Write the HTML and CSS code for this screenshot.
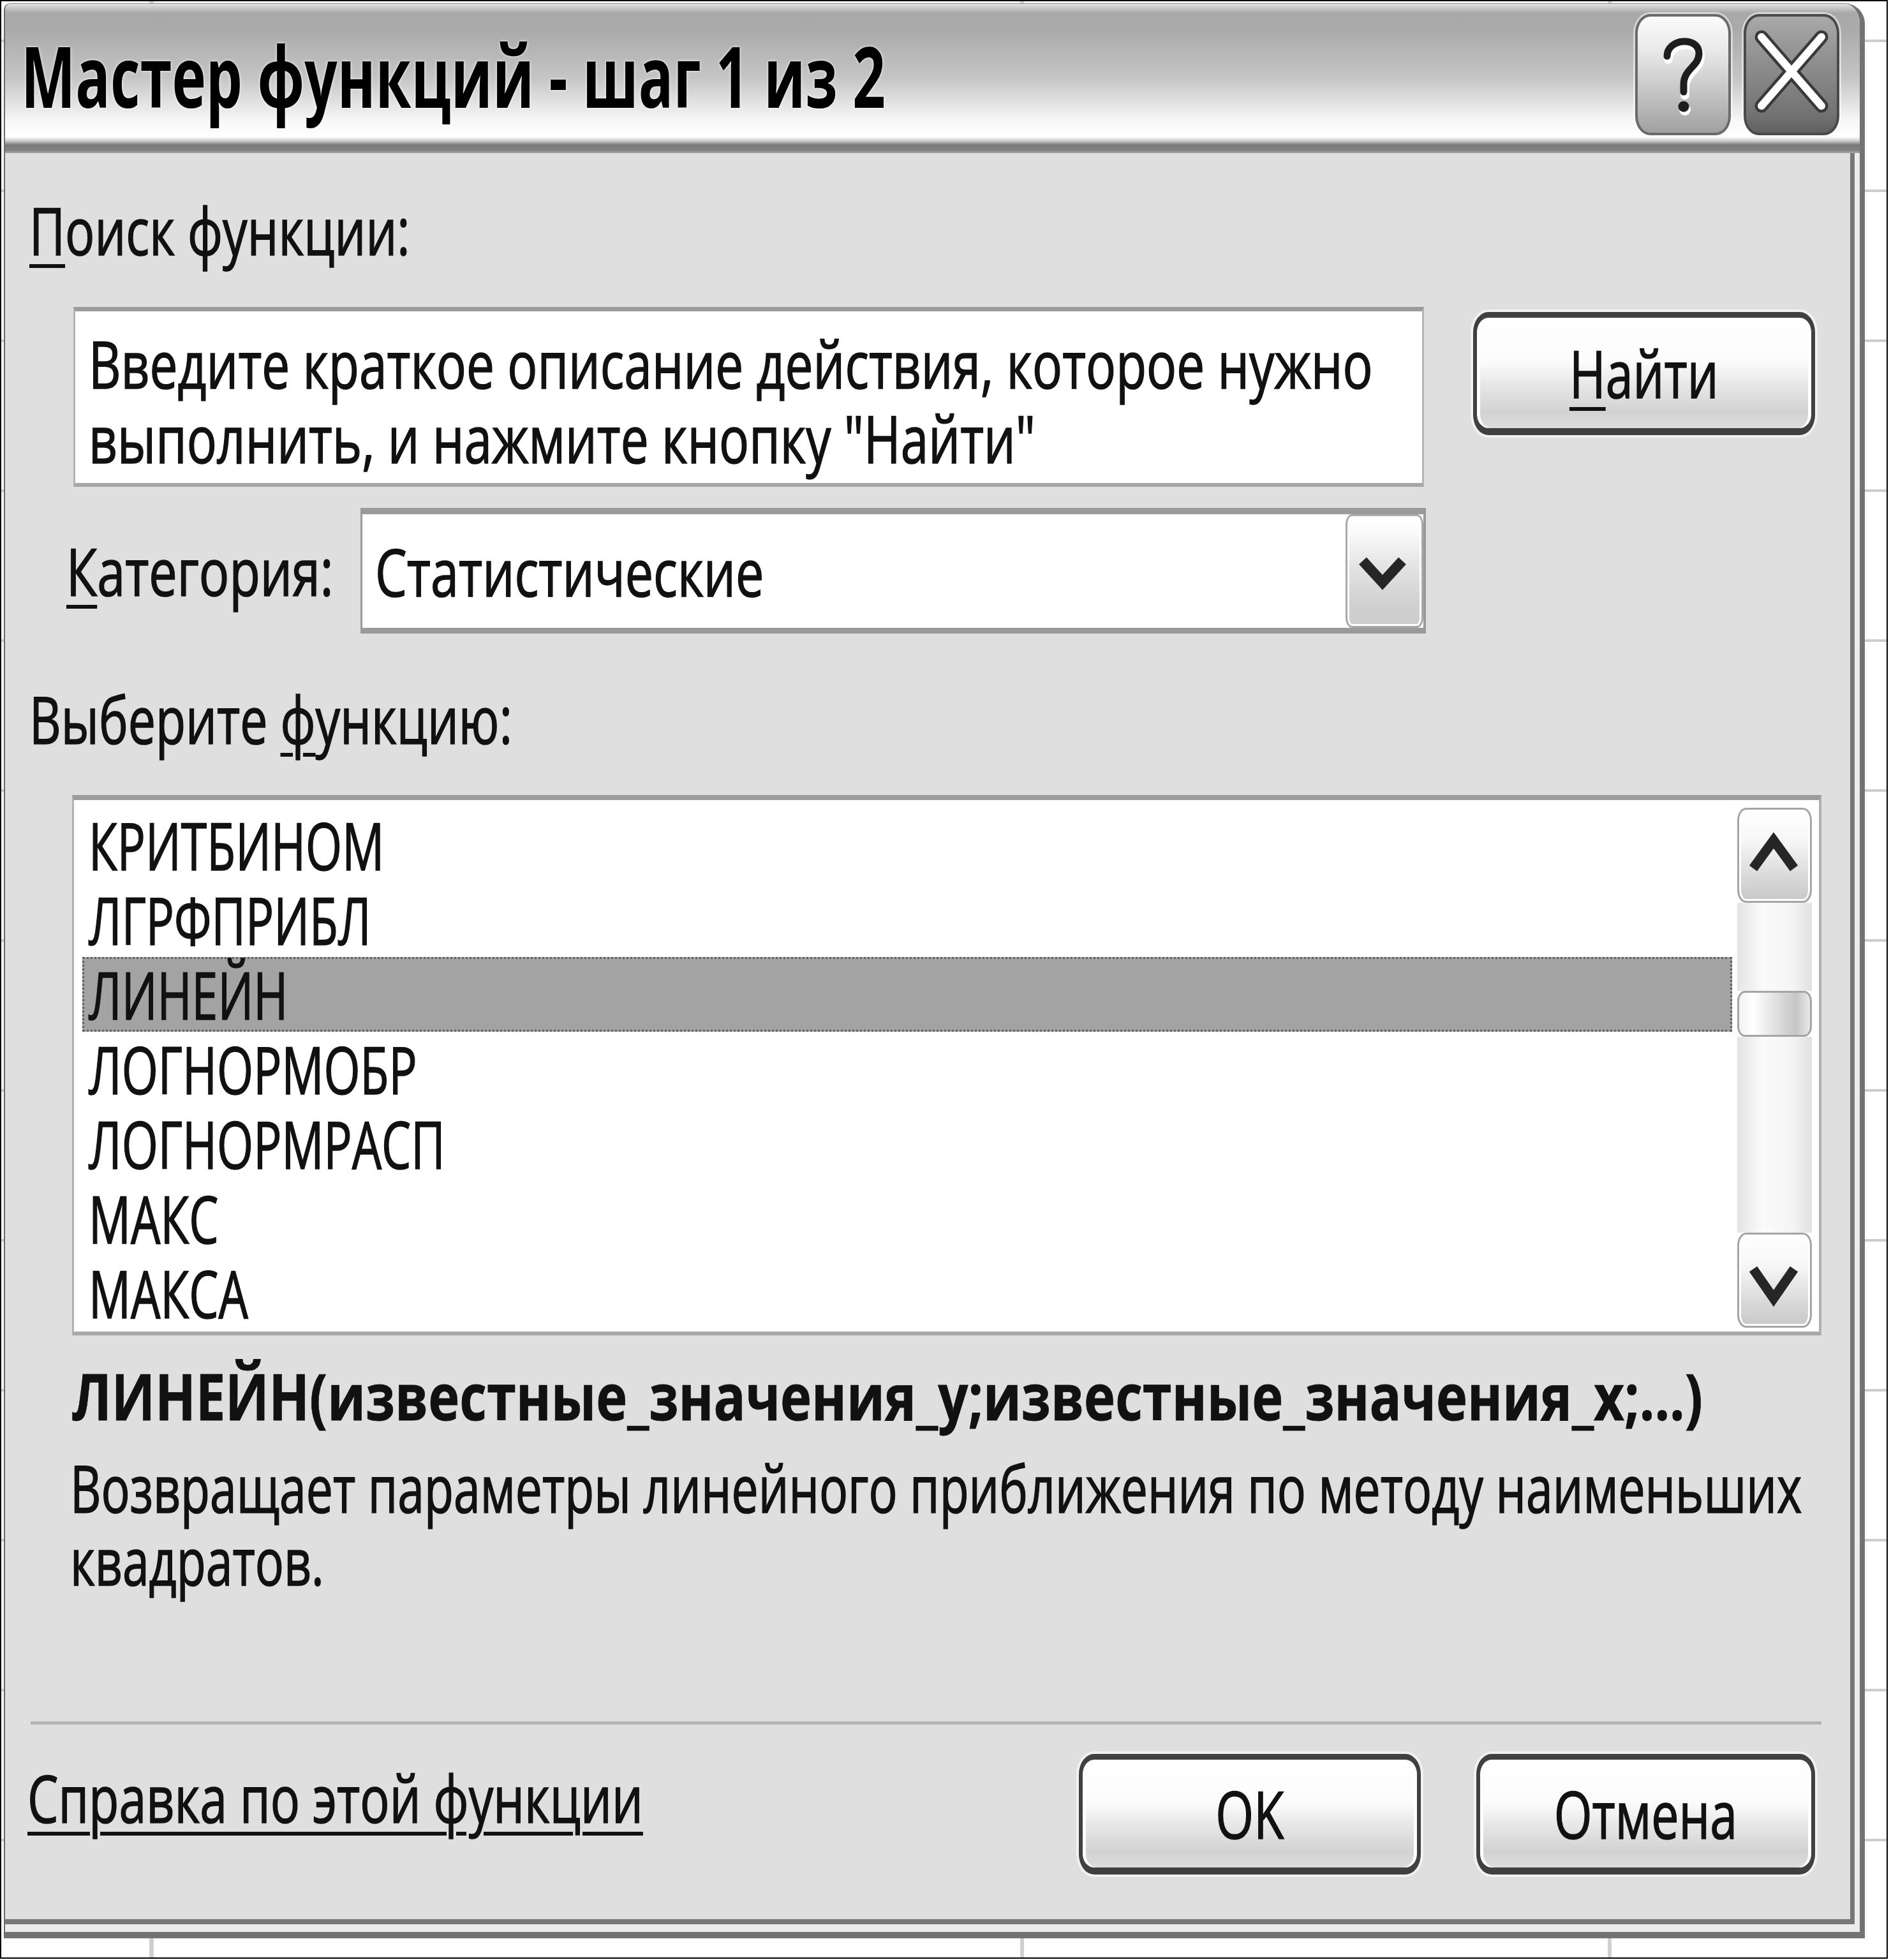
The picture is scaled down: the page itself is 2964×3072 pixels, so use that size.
FILE: index.html
```html
<!DOCTYPE html>
<html lang="ru">
<head>
<meta charset="utf-8">
<title>Мастер функций - шаг 1 из 2</title>
<link rel="stylesheet" href="styles.css">
</head>
<body>
<div class="screen">
  <div class="dialog">
    <div class="titlebar">
      <div class="title"><span class="t">Мастер функций - шаг 1 из 2</span></div>
      <div class="tb-buttons">
        <div class="tb-btn help">
          <svg width="142" height="182" viewBox="0 0 142 182">
            <path d="M46 62 C46 34 96 30 96 58 C96 78 72 82 72 106 L72 118" fill="none" stroke="#fff" stroke-width="14" stroke-linecap="round" transform="translate(2 5)"/>
            <circle cx="74" cy="146" r="9" fill="#fff"/>
            <path d="M46 62 C46 34 96 30 96 58 C96 78 72 82 72 106 L72 118" fill="none" stroke="#1e1e1e" stroke-width="11" stroke-linecap="round"/>
            <circle cx="72" cy="141" r="8.5" fill="#1e1e1e"/>
          </svg>
        </div>
        <div class="tb-btn close">
          <svg width="142" height="182" viewBox="0 0 142 182">
            <path d="M24 32 L118 140 M118 32 L24 140" stroke="#3a3a3a" stroke-width="21" stroke-linecap="round"/>
            <path d="M24 32 L118 140 M118 32 L24 140" stroke="#fff" stroke-width="12" stroke-linecap="round"/>
          </svg>
        </div>
      </div>
    </div>
    <div class="client-wrap">
      <div class="client">
        <div class="line label"><span class="t"><u>П</u>оиск функции:</span></div>
        <div class="search-row">
          <div class="textbox">
            <div class="line"><span class="t">Введите краткое описание действия, которое нужно</span></div>
            <div class="line"><span class="t">выполнить, и нажмите кнопку "Найти"</span></div>
          </div>
          <div class="btn find"><span class="t tc"><u>Н</u>айти</span></div>
        </div>
        <div class="cat-row">
          <div class="line cat-label"><span class="t"><u>К</u>атегория:</span></div>
          <div class="select">
            <div class="line select-value"><span class="t">Статистические</span></div>
            <div class="select-btn">
              <svg width="110" height="172" viewBox="0 0 110 172">
                <polyline points="24,70 55,104 86,70" fill="none" stroke="#262626" stroke-width="16"/>
              </svg>
            </div>
          </div>
        </div>
        <div class="line label choose"><span class="t">Выберите <u>ф</u>ункцию:</span></div>
        <div class="listbox">
          <ul class="items">
            <li><span class="t">КРИТБИНОМ</span></li>
            <li><span class="t">ЛГРФПРИБЛ</span></li>
            <li class="sel"><span class="t">ЛИНЕЙН</span></li>
            <li><span class="t">ЛОГНОРМОБР</span></li>
            <li><span class="t">ЛОГНОРМРАСП</span></li>
            <li><span class="t">МАКС</span></li>
            <li><span class="t">МАКСА</span></li>
          </ul>
          <div class="scrollbar">
            <div class="sb-btn">
              <svg width="111" height="143" viewBox="0 0 111 143">
                <polyline points="22,92 54,48 86,92" fill="none" stroke="#262626" stroke-width="15"/>
              </svg>
            </div>
            <div class="sb-track upper"></div>
            <div class="sb-thumb"></div>
            <div class="sb-track lower"></div>
            <div class="sb-btn">
              <svg width="111" height="143" viewBox="0 0 111 143">
                <polyline points="22,54 54,100 86,54" fill="none" stroke="#262626" stroke-width="15"/>
              </svg>
            </div>
          </div>
        </div>
        <div class="line formula"><span class="t">ЛИНЕЙН(известные_значения_y;известные_значения_x;...)</span></div>
        <div class="desc">
          <div class="dline"><span class="t">Возвращает параметры линейного приближения по методу наименьших</span></div>
          <div class="dline"><span class="t">квадратов.</span></div>
        </div>
        <div class="separator"></div>
        <div class="bottom-row">
          <div class="line help-link"><span class="t">Справка по этой функции</span></div>
          <div class="btn ok"><span class="t tc">OK</span></div>
          <div class="btn cancel"><span class="t tc">Отмена</span></div>
        </div>
      </div>
    </div>
  </div>
</div>
</body>
</html>
```
FILE: styles.css
```css
:root {
  --k: 0.755;
}

* { box-sizing: border-box; }

body {
  margin: 0;
  background: #ffffff;
  font-family: "Open Sans", "Noto Sans", "DejaVu Sans", sans-serif;
  color: #111111;
}

.t {
  display: inline-block;
  white-space: nowrap;
  transform: scaleX(var(--k));
  transform-origin: 0 50%;
  -webkit-text-stroke: 1.6px #111;
}
.t.tc { transform-origin: 50% 50%; }

u {
  text-decoration: underline;
  text-decoration-thickness: 6px;
  text-underline-offset: 14px;
}

.screen {
  width: 2959px;
  height: 3070px;
  border: 2px solid #000;
  overflow: hidden;
  background-color: #fff;
  background-image:
    repeating-linear-gradient(to bottom, transparent 0 60px, #cdcdcd 60px 64px, transparent 64px 235px),
    linear-gradient(to right, transparent 0 232px, #d0d0d0 232px 239px, transparent 239px 1597px, #d0d0d0 1597px 1603px, transparent 1603px 2518px, #d0d0d0 2518px 2524px, transparent 2524px);
}

.dialog {
  margin: 3px 0 0 4px;
  width: 2917px;
  height: 3033px;
  border-left: 2px solid #6a6a6a;
  border-right: 8px solid #737373;
  border-bottom: 10px solid #737373;
  border-top: 1px solid #8a8a8a;
  border-top-left-radius: 10px;
  border-top-right-radius: 32px;
  background: #ececec;
  display: flex;
  flex-direction: column;
  overflow: hidden;
}

.titlebar {
  flex: none;
  height: 234px;
  display: flex;
  align-items: flex-start;
  padding: 0 32px 0 25px;
  background: linear-gradient(to bottom,
    #e2e2e2 0%, #a9a9a9 6%, #aaaaaa 17%, #c4c4c4 49%, #f8f8f8 79%,
    #ffffff 89%, #c8c8c8 92%, #7a7a7a 94.5%, #808080 98%, #a8a8a8 100%);
}

.title {
  flex: 1;
  padding-top: 37px;
  font-size: 133px;
  font-weight: 700;
  line-height: 150px;
  color: #000;
  text-shadow: 0 0 5px #fff;
}
.title .t { --k: 0.68; -webkit-text-stroke: 0; }

.tb-buttons {
  display: flex;
  gap: 20px;
  margin-top: 16px;
}

.tb-btn {
  width: 150px;
  height: 190px;
  border-radius: 24px / 30px;
  display: flex;
  align-items: center;
  justify-content: center;
}
.tb-btn.help {
  border: 4px solid #6a6a6a;
  background: linear-gradient(to bottom, #fbfbfb 0%, #e8e8e8 30%, #c0c0c0 70%, #a0a0a0 100%);
  box-shadow: 0 0 0 3px rgba(255,255,255,0.5);
}
.tb-btn.close {
  border: 4px solid #4a4a4a;
  background: linear-gradient(to bottom, #a8a8a8 0%, #8e8e8e 40%, #727272 85%, #606060 100%);
  box-shadow: 0 0 0 3px rgba(255,255,255,0.5);
}

.client-wrap {
  flex: 1;
  padding: 0 8px 12px 0;
  background: #ececec;
}

.client {
  height: 100%;
  background: #dfdfdf;
  border-right: 7px solid #777;
  border-bottom: 8px solid #777;
  padding-top: 62px;
  display: flex;
  flex-direction: column;
  align-items: flex-start;
}

.line {
  font-size: 102px;
  line-height: 117px;
}

.label { margin-left: 38px; }

.search-row {
  display: flex;
  align-items: flex-start;
  margin-top: 62px;
  margin-left: 107px;
}

.textbox {
  width: 2117px;
  height: 282px;
  background: #fff;
  border-style: solid;
  border-color: #9c9c9c #b4b4b4 #a6a6a6 #b4b4b4;
  border-width: 7px 3px 6px 3px;
  padding: 23px 0 0 21px;
}
.textbox .t { --k: 0.768; }

.btn {
  display: flex;
  align-items: center;
  justify-content: center;
  font-size: 102px;
  line-height: 117px;
  border-style: solid;
  border-color: #404040;
  border-width: 9px 6px 11px 6px;
  border-radius: 24px / 32px;
  background: linear-gradient(to bottom, #ffffff 0%, #fbfbfb 40%, #e6e6e6 62%, #d2d2d2 85%, #dcdcdc 100%);
  box-shadow: inset 5px 0 0 #fff, inset -5px 0 0 #fff, 0 0 0 4px rgba(255,255,255,0.55);
}

.find {
  width: 536px;
  height: 193px;
  margin-left: 77px;
  margin-top: 8px;
}

.cat-row {
  display: flex;
  align-items: center;
  margin-top: 33px;
  margin-left: 96px;
}

.cat-label { width: 461px; }
.cat-label .t { --k: 0.775; }

.select {
  width: 1670px;
  height: 197px;
  display: flex;
  background: #fff;
  border-style: solid;
  border-color: #9a9a9a;
  border-width: 10px 4px 9px 3px;
}

.select-value {
  flex: 1;
  padding-left: 20px;
  display: flex;
  align-items: center;
}
.select-value .t { --k: 0.775; }

.select-btn {
  width: 122px;
  border: 3px solid #a9a9a9;
  border-radius: 10px / 16px;
  background: linear-gradient(to bottom, #ffffff 0%, #fafafa 15%, #e4e4e4 45%, #d0d0d0 80%, #cccccc 100%);
  box-shadow: inset 0 0 0 3px #fff;
}
.select-btn svg { display: block; }

.choose { margin-top: 75px; }

.listbox {
  margin-top: 61px;
  margin-left: 105px;
  width: 2742px;
  height: 847px;
  display: flex;
  background: #fff;
  border-style: solid;
  border-color: #9c9c9c #b0b0b0 #a8a8a8 #b0b0b0;
  border-width: 8px 4px 6px 3px;
}

.items {
  list-style: none;
  margin: 0 0 0 13px;
  padding: 12px 0 0 0;
  width: 2586px;
  flex: none;
}
.items li {
  height: 117px;
  font-size: 102px;
  line-height: 117px;
  padding-left: 10px;
}
.items .t { --k: 0.72; }
.items li.sel {
  background: #a3a3a3;
  outline: 3px dotted #5e5e5e;
  outline-offset: -3px;
}

.scrollbar {
  width: 117px;
  margin: 12px 0 6px 8px;
  display: flex;
  flex-direction: column;
}
.sb-btn {
  flex: none;
  height: 149px;
  border: 3px solid #a5a5a5;
  border-radius: 14px / 20px;
  background: linear-gradient(to bottom, #ffffff 0%, #f6f6f6 35%, #d8d8d8 75%, #c8c8c8 100%);
  box-shadow: inset 0 0 0 3px #fff;
}
.sb-btn svg { display: block; }
.sb-track {
  background: linear-gradient(to right, #e4e4e4, #fbfbfb 35%, #f4f4f4 75%, #e0e0e0);
}
.sb-track.upper { height: 138px; flex: none; }
.sb-track.lower { flex: 1; }
.sb-thumb {
  flex: none;
  height: 72px;
  border: 3px solid #a5a5a5;
  border-radius: 12px / 16px;
  background: linear-gradient(to right, #f2f2f2, #ffffff 20%, #e2e2e2 50%, #c6c6c6 80%, #e8e8e8);
}

.formula {
  margin-top: 36px;
  margin-left: 105px;
  font-size: 100px;
  font-weight: 700;
}
.formula .t { --k: 0.83; -webkit-text-stroke: 0.8px #111; }

.desc {
  margin-top: 29px;
  margin-left: 102px;
}
.dline {
  font-size: 102px;
  line-height: 114px;
}
.dline .t { --k: 0.736; }

.separator {
  flex: none;
  margin-top: 195px;
  margin-left: 40px;
  width: 2807px;
  height: 5px;
  background: #b3b3b3;
}

.bottom-row {
  margin-top: 46px;
  width: 100%;
  display: flex;
  align-items: flex-start;
  padding-right: 55px;
}

.help-link {
  flex: 1;
  margin-left: 35px;
  margin-top: 10px;
}
.help-link .t {
  text-decoration: underline;
  text-decoration-thickness: 6px;
  text-underline-offset: 14px;
}

.ok {
  width: 536px;
  height: 189px;
}
.cancel {
  width: 531px;
  height: 189px;
  margin-left: 87px;
}
```
